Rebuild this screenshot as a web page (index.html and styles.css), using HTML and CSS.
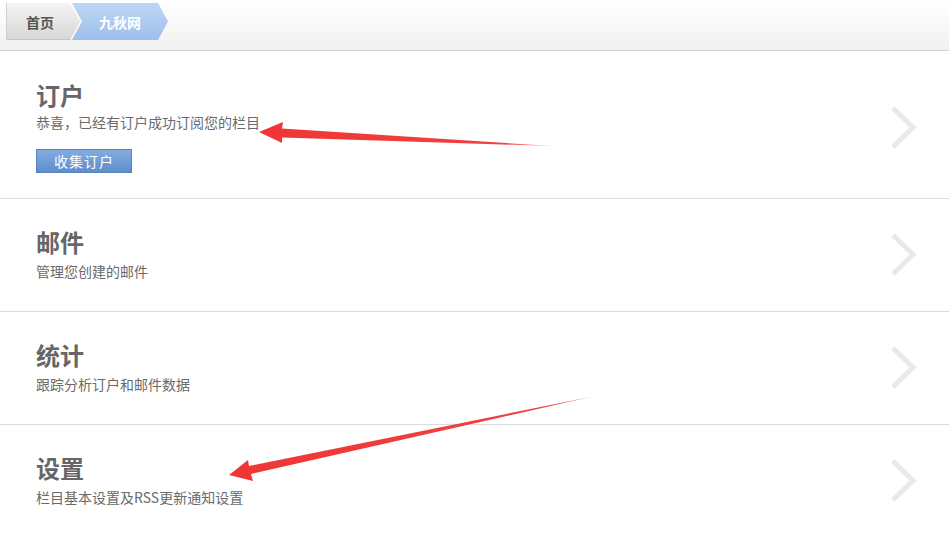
FILE: index.html
```html
<!DOCTYPE html>
<html lang="zh-CN">
<head>
<meta charset="utf-8">
<title>九秋网</title>
<link rel="stylesheet" href="styles.css">
</head>
<body>
<div class="page">
  <header class="topbar">
    <nav class="crumbs">
      <a class="crumb crumb-home" href="#">首页</a>
      <a class="crumb crumb-current" href="#">九秋网</a>
    </nav>
  </header>

  <ul class="panels">
    <li class="panel panel-first">
      <div class="panel-body">
        <h2 class="panel-title">订户</h2>
        <p class="panel-desc">恭喜，已经有订户成功订阅您的栏目</p>
        <a class="btn" href="#">收集订户</a>
      </div>
      <svg class="chev" width="27" height="45" viewBox="0 0 27 45"><path d="M3 3 L23 22.5 L3 42" fill="none" stroke="#e9e9e9" stroke-width="5"/></svg>
    </li>
    <li class="panel">
      <div class="panel-body">
        <h2 class="panel-title">邮件</h2>
        <p class="panel-desc">管理您创建的邮件</p>
      </div>
      <svg class="chev" width="27" height="45" viewBox="0 0 27 45"><path d="M3 3 L23 22.5 L3 42" fill="none" stroke="#e9e9e9" stroke-width="5"/></svg>
    </li>
    <li class="panel">
      <div class="panel-body">
        <h2 class="panel-title">统计</h2>
        <p class="panel-desc">跟踪分析订户和邮件数据</p>
      </div>
      <svg class="chev" width="27" height="45" viewBox="0 0 27 45"><path d="M3 3 L23 22.5 L3 42" fill="none" stroke="#e9e9e9" stroke-width="5"/></svg>
    </li>
    <li class="panel panel-last">
      <div class="panel-body">
        <h2 class="panel-title">设置</h2>
        <p class="panel-desc">栏目基本设置及RSS更新通知设置</p>
      </div>
      <svg class="chev" width="27" height="45" viewBox="0 0 27 45"><path d="M3 3 L23 22.5 L3 42" fill="none" stroke="#e9e9e9" stroke-width="5"/></svg>
    </li>
  </ul>

  <svg class="annotations" width="949" height="536" viewBox="0 0 949 536">
    <defs>
      <linearGradient id="g1" x1="259" y1="0" x2="552" y2="0" gradientUnits="userSpaceOnUse">
        <stop offset="0" stop-color="#f03636"/>
        <stop offset="0.85" stop-color="#f04040"/>
        <stop offset="1" stop-color="#f6a0a0"/>
      </linearGradient>
      <linearGradient id="g2" x1="229" y1="0" x2="595" y2="0" gradientUnits="userSpaceOnUse">
        <stop offset="0" stop-color="#f03636"/>
        <stop offset="0.85" stop-color="#f04040"/>
        <stop offset="1" stop-color="#f6a0a0"/>
      </linearGradient>
    </defs>
    <polygon fill="url(#g1)" points="259,132 283,122 282,128.5 552,146 282,137.5 282,143"/>
    <polygon fill="url(#g2)" points="229,475 248,460 249,466 595,396 251,474 253,481"/>
  </svg>
</div>
</body>
</html>
```

FILE: styles.css
```css
* { box-sizing: border-box; }

html, body {
  margin: 0;
  padding: 0;
  background: #ffffff;
}

body {
  font-family: "Noto Sans CJK SC", "Liberation Sans", sans-serif;
  color: #666;
}

.page {
  position: relative;
  width: 949px;
  height: 536px;
  overflow: hidden;
}

.topbar {
  height: 51px;
  background: linear-gradient(#ffffff, #f1f1f1);
  border-bottom: 1px solid #d5d5d5;
  padding: 3px 0 0 6px;
}

.crumbs {
  display: flex;
}

.crumb {
  display: flex;
  align-items: center;
  height: 37px;
  font-size: 14px;
  font-weight: bold;
  text-decoration: none;
  line-height: 1;
}

.crumb-home {
  width: 74px;
  padding-left: 20px;
  color: #555;
  background: linear-gradient(#f5f5f5, #d6d6d6);
  clip-path: polygon(0 0, 64px 0, 74px 50%, 64px 100%, 0 100%);
  box-shadow: inset 1px 0 0 #cfcfcf, inset 0 -1px 0 #c6c6c6;
}

.crumb-current {
  width: 96px;
  margin-left: -8px;
  justify-content: center;
  color: #fff;
  background: linear-gradient(#bdd6f5, #9ebfea);
  clip-path: polygon(0 0, 86px 0, 96px 50%, 86px 100%, 0 100%, 10px 50%);
}

.panels {
  list-style: none;
  margin: 0;
  padding: 0;
}

.panel {
  display: flex;
  align-items: center;
  justify-content: space-between;
  border-bottom: 1px solid #dcdcdc;
  padding: 29px 32px 31px 36px;
}

.panel-first {
  padding-top: 30px;
  padding-bottom: 25px;
}

.panel-last {
  border-bottom: none;
}

.panel-body {
  display: flex;
  flex-direction: column;
  align-items: flex-start;
}

.panel-title {
  margin: 0;
  font-size: 24px;
  line-height: 28px;
  font-weight: bold;
  color: #666;
}

.panel-desc {
  margin: 6px 0 0;
  font-size: 14px;
  line-height: 18px;
  color: #6a6a6a;
}

.panel-first .panel-desc {
  margin-top: 4px;
}

.btn {
  margin-top: 18px;
  width: 96px;
  height: 24px;
  display: flex;
  align-items: center;
  justify-content: center;
  font-size: 14px;
  color: #fff;
  text-decoration: none;
  background: linear-gradient(#84acdf, #5f8dcb);
  border: 1px solid #5b84ba;
  letter-spacing: 1px;
}

.chev {
  display: block;
  flex: none;
}

.annotations {
  position: absolute;
  top: 0;
  left: 0;
  pointer-events: none;
}
```
